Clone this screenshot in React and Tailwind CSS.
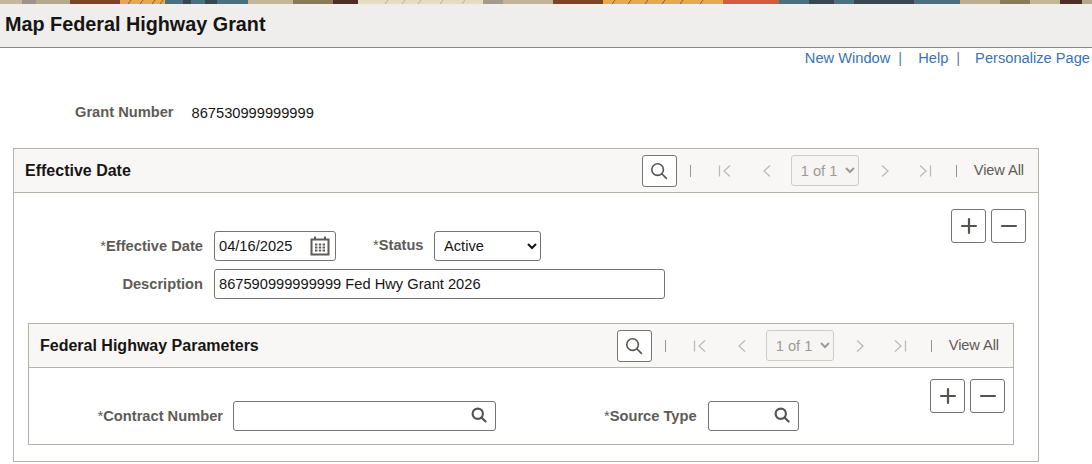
import { Minus, Plus } from 'lucide-react';

const FONT = 'font-["Liberation_Sans",Arial,sans-serif]';

// decorative banner along the top edge
const BANNER = [
  [0, 22, '#c4b89c'], [22, 14, '#9c9488'], [36, 34, '#b5a98c'], [70, 50, '#7c4426'],
  [120, 45, '#e8a94e'], [165, 18, '#4b7080'], [183, 8, '#36474f'], [191, 14, '#4b7080'],
  [205, 12, '#36474f'], [217, 31, '#4b7080'], [248, 45, '#c4b796'], [293, 40, '#8b7a58'],
  [333, 25, '#4e2e22'], [358, 125, '#e6dcc2'], [483, 20, '#a39b8c'], [503, 50, '#c0b397'],
  [553, 50, '#7c4426'], [603, 120, '#e8a94e'], [723, 56, '#d25c3c'], [779, 30, '#4b7080'],
  [809, 25, '#36474f'], [834, 20, '#4b7080'], [854, 60, '#36474f'], [914, 46, '#4b7080'],
  [960, 40, '#bdae8e'], [1000, 30, '#8b7a58'], [1030, 30, '#c4b796'], [1060, 22, '#4e2e22'],
  [1082, 10, '#b5a98c'],
];

// diagonal brush marks on the orange and cream parts of the banner
const MARKS = [
  [128, '#8a5a2c'], [140, '#8a5a2c'], [152, '#8a5a2c'], [160, '#8a5a2c'],
  [385, '#b9ad92'], [402, '#b9ad92'], [418, '#b9ad92'], [440, '#b9ad92'], [462, '#b9ad92'],
  [612, '#8a5a2c'], [628, '#8a5a2c'], [645, '#8a5a2c'], [662, '#8a5a2c'], [680, '#8a5a2c'], [700, '#8a5a2c'],
];

function Banner() {
  return (
    <svg width="1092" height="4" className="block">
      {BANNER.map(([x, w, fill]) => (
        <rect key={x} x={x} y="0" width={w} height="4" fill={fill} />
      ))}
      {MARKS.map(([x, stroke]) => (
        <path key={x} d={`M${x} 4 L${x + 3} 0`} stroke={stroke} strokeWidth="1" />
      ))}
    </svg>
  );
}

function SearchGlyph({ size = 18, width = 1.6, className = '' }) {
  return (
    <svg width={size} height={size} viewBox="0 0 18 18" fill="none" stroke="currentColor" strokeWidth={width} className={className}>
      <circle cx="7.6" cy="7.6" r="5.8" />
      <path d="M11.8 11.8 L16.4 16.4" strokeLinecap="round" />
    </svg>
  );
}

function CalendarGlyph() {
  return (
    <svg width="20" height="20" viewBox="0 0 20 20" className="text-[#5e5b58]" fill="currentColor">
      <path fillRule="evenodd" d="M0.500 2.500h3.500V0.500h2v2h8V0.500h2v2h3.500v17H0.500V2.500zm2 2v13h15V4.500H2.500z" />
      {[5, 8.8, 12.600].map(x => [7.500, 10.500, 13.500].map(y => (
        <rect key={`${x}-${y}`} x={x} y={y} width="2.400" height="2" />
      )))}
    </svg>
  );
}

function NavGlyph({ d }) {
  return (
    <svg width="14" height="14" viewBox="0 0 14 14" fill="none" stroke="#bdbab6" strokeWidth="1.300">
      <path d={d} />
    </svg>
  );
}

function Pager() {
  return (
    <div className="flex items-center">
      <button className="w-[35px] h-[32px] flex items-center justify-center bg-white border border-[#77736e] rounded-[3px] text-[#55524f]">
        <SearchGlyph />
      </button>
      <div className="w-px h-[12px] bg-[#98948f] ml-[13px]" />
      <div className="ml-[27px]"><NavGlyph d="M1.500 1.500V12.500 M12 1.500L6 7L12 12.500" /></div>
      <div className="ml-[28px]"><NavGlyph d="M10 1.500L4 7L10 12.500" /></div>
      <select disabled className="ml-[17px] w-[68px] h-[31px] bg-[#f6f5f3] border border-[#cfccc8] rounded-[3px] pl-[5px] text-[14.67px] text-[#9d9a96]">
        <option>1 of 1</option>
      </select>
      <div className="ml-[19px]"><NavGlyph d="M4 1.500L10 7L4 12.500" /></div>
      <div className="ml-[26px]"><NavGlyph d="M2 1.500L8 7L2 12.500 M12.500 1.500V12.500" /></div>
      <div className="w-px h-[12px] bg-[#98948f] ml-[24px]" />
      <span className="ml-[17px] text-[14.67px] text-[#5e5b58] tracking-[-0.1px] -mt-[2px]">View All</span>
    </div>
  );
}

function PanelHeader({ title }) {
  return (
    <div className="h-[44px] flex items-center justify-between pl-[11px] pr-[14px] bg-[#f8f7f5] border-b border-[#b5b1ab]">
      <h2 className="text-[16px] font-bold text-[#161514]">{title}</h2>
      <Pager />
    </div>
  );
}

function RowButtons() {
  return (
    <div className="flex gap-[5px]">
      <button className="w-[35px] h-[34px] flex items-center justify-center bg-white border border-[#77736e] rounded-[3px] text-[#55524f]">
        <Plus size={24} strokeWidth={2.2} absoluteStrokeWidth />
      </button>
      <button className="w-[35px] h-[34px] flex items-center justify-center bg-white border border-[#77736e] rounded-[3px] text-[#55524f]">
        <Minus size={24} strokeWidth={2.2} absoluteStrokeWidth />
      </button>
    </div>
  );
}

function Label({ required, children, className = '' }) {
  return (
    <label className={`text-[14.67px] font-bold text-[#5e5b58] text-right whitespace-nowrap ${className}`}>
      {required && <span className="font-normal">*</span>}
      {children}
    </label>
  );
}

function PromptInput({ className }) {
  return (
    <div className={`h-[30px] flex items-center justify-end pr-[8px] bg-white border border-[#77736e] rounded-[3px] text-[#55524f] ${className}`}>
      <SearchGlyph size={16} width={2.400} className="-mt-[2px]" />
    </div>
  );
}

export default function App() {
  return (
    <div className={`w-[1092px] h-[464px] overflow-hidden bg-white ${FONT}`}>
      <Banner />

      <div className="h-[44px] flex items-center pl-[5px] bg-[#efeeec] border-b border-[#8a8886]">
        <h1 className="text-[19.800px] font-bold text-[#161514] -mt-[1px]">Map Federal Highway Grant</h1>
      </div>

      {/* links */}
      <div className="h-[20px] flex items-center justify-end pr-[2px] text-[14.67px] text-[#3a73b5] whitespace-nowrap">
        <span>New Window</span>
        <span className="ml-[8px] text-[#5e7ea0]">|</span>
        <span className="ml-[16px]">Help</span>
        <span className="ml-[8px] text-[#5e7ea0]">|</span>
        <span className="ml-[15px]">Personalize Page</span>
      </div>

      <div className="flex items-center pl-[75px] mt-[35px] h-[20px]">
        <Label className="-mt-[2px]">Grant Number</Label>
        <span className="ml-[18px] text-[14.67px] text-[#161514]">867530999999999</span>
      </div>

      {/* effective date panel */}
      <section className="w-[1026px] h-[314px] ml-[13px] mt-[25px] border border-[#b5b1ab]">
        <PanelHeader title="Effective Date" />
        <div className="px-[14px]">
          <div className="flex h-[130px]">
            <div className="pt-[38px] flex flex-col gap-[8px]">
              <div className="flex items-center h-[30px]">
                <Label required className="w-[175px]">Effective Date</Label>
                <div className="ml-[11px] w-[122px] h-[30px] flex items-center justify-between pl-[4px] pr-[5px] bg-white border border-[#77736e] rounded-[3px] text-[14.67px] text-[#161514]">
                  04/16/2025
                  <CalendarGlyph />
                </div>
                <Label required className="ml-[37px] w-[50px] -mt-[2px]">Status</Label>
                <select defaultValue="Active" className="ml-[11px] w-[107px] h-[30px] pl-[5px] bg-white border border-[#77736e] rounded-[3px] text-[14.67px] text-[#161514]">
                  <option>Active</option>
                </select>
              </div>
              <div className="flex items-center h-[30px]">
                <Label className="w-[175px]">Description</Label>
                <div className="ml-[11px] w-[451px] h-[30px] flex items-center pl-[4px] bg-white border border-[#77736e] rounded-[3px] text-[14.67px] text-[#161514]">
                  867590999999999 Fed Hwy Grant 2026
                </div>
              </div>
            </div>
            <div className="ml-auto pt-[16px] -mr-[2px]">
              <RowButtons />
            </div>
          </div>

          {/* parameters panel */}
          <section className="w-[986px] h-[122px] border border-[#b5b1ab]">
            <PanelHeader title="Federal Highway Parameters" />
            <div className="flex px-[8px]">
              <div className="pt-[33px] flex items-center">
                <Label required className="w-[186px]">Contract Number</Label>
                <PromptInput className="ml-[10px] w-[263px]" />
                <Label required className="ml-[108px]">Source Type</Label>
                <PromptInput className="ml-[11px] w-[91px]" />
              </div>
              <div className="ml-auto pt-[11px]">
                <RowButtons />
              </div>
            </div>
          </section>
        </div>
      </section>
    </div>
  );
}
